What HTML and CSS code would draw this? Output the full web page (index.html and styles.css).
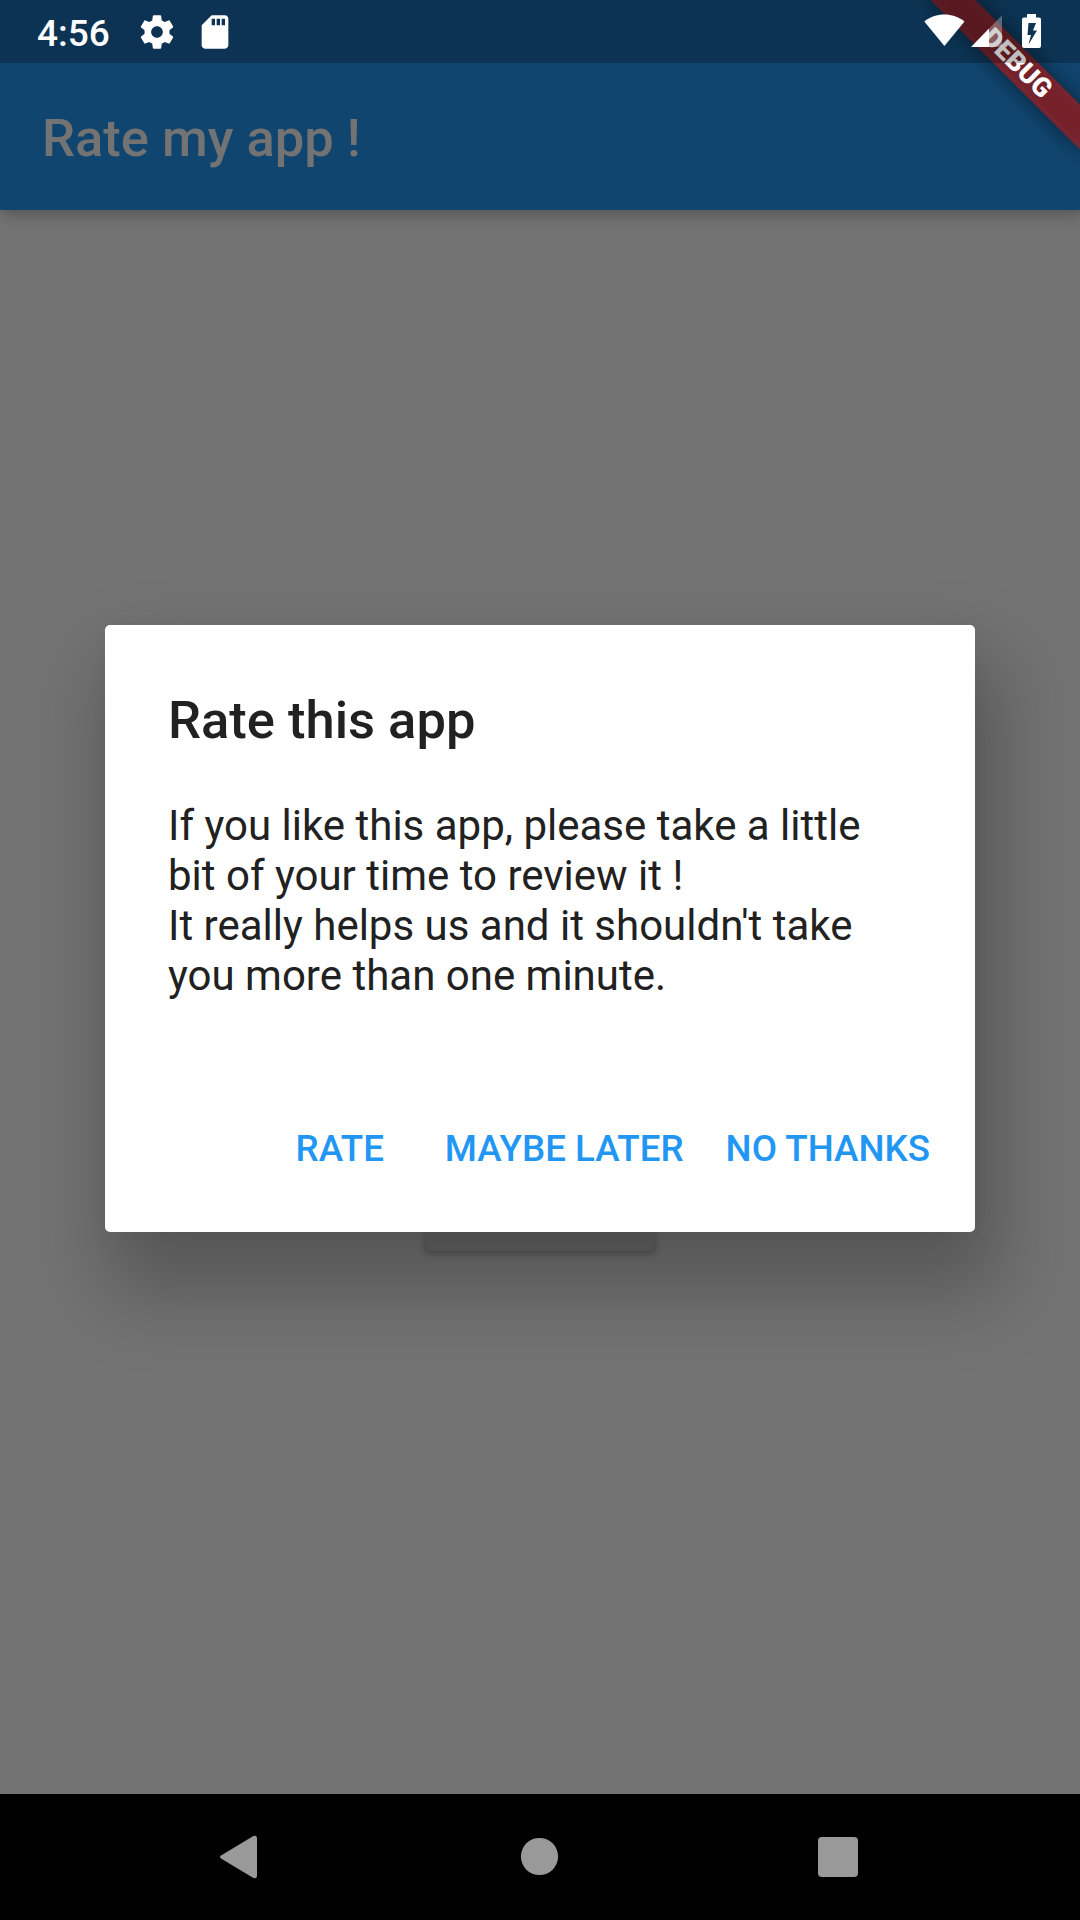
FILE: index.html
```html
<!DOCTYPE html>
<html lang="en">
<head>
<meta charset="utf-8">
<title>Rate my app !</title>
<link rel="stylesheet" href="styles.css">
</head>
<body>
<div class="screen">
  <header class="app-bar"><h1 class="app-title">Rate my app !</h1></header>
  <main class="page"><div class="raised-button"></div></main>
  <nav class="nav-bar">
    <svg class="nav-icon" viewBox="0 0 60 60"><path d="M11.4 28.3 42.6 9.4Q47 7.4 47 12V48Q47 52.600 42.600 50.600L11.400 31.700Q8.600 30 11.400 28.300Z"/></svg>
    <svg class="nav-icon" viewBox="0 0 60 60"><circle cx="30.500" cy="29.500" r="18.600"/></svg>
    <svg class="nav-icon" viewBox="0 0 60 60"><rect x="10" y="10" width="40" height="40" rx="4"/></svg>
  </nav>

  <div class="dialog-layer">
    <section class="dialog">
      <h2 class="dialog-title">Rate this app</h2>
      <p class="dialog-text">If you like this app, please take a little<br>bit of your time to review it !<br>It really helps us and it shouldn't take<br>you more than one minute.</p>
      <div class="dialog-actions">
        <button class="flat-button">RATE</button>
        <button class="flat-button">MAYBE LATER</button>
        <button class="flat-button">NO THANKS</button>
      </div>
    </section>
  </div>

  <div class="banner"><span class="banner-text">DEBUG</span></div>

  <div class="status-bar">
    <div class="status-group">
      <span class="clock">4:56</span>
      <svg class="notice" viewBox="0 0 24 24"><path d="M19.430 12.980c.04-.32.07-.64.07-.98s-.03-.66-.07-.98l2.110-1.650c.19-.15.24-.42.12-.64l-2-3.460c-.12-.22-.39-.3-.61-.22l-2.490 1c-.52-.4-1.080-.73-1.690-.98l-.38-2.650C14.460 2.180 14.250 2 14 2h-4c-.25 0-.46.18-.49.42l-.38 2.650c-.61.25-1.170.59-1.690.98l-2.490-1c-.23-.09-.49 0-.61.22l-2 3.460c-.13.22-.07.49.12.64l2.110 1.650c-.04.32-.07.65-.07.98s.03.66.07.98l-2.110 1.650c-.19.15-.24.42-.12.64l2 3.460c.12.22.39.3.61.22l2.490-1c.52.4 1.080.73 1.690.98l.38 2.650c.03.24.24.42.49.42h4c.25 0 .46-.18.49-.42l.38-2.650c.61-.25 1.170-.59 1.690-.98l2.490 1c.23.09.49 0 .61-.22l2-3.460c.12-.22.07-.49-.12-.64l-2.110-1.650zM12 15.500c-1.930 0-3.500-1.570-3.500-3.500s1.570-3.500 3.500-3.500 3.500 1.570 3.500 3.500-1.570 3.500-3.500 3.500z"/></svg>
      <svg class="notice" viewBox="0 0 24 24"><path d="M18 2h-8L4.020 8 4 20c0 1.100.9 2 2 2h12c1.100 0 2-.9 2-2V4c0-1.100-.9-2-2-2zm-6 6h-2V4h2v4zm3 0h-2V4h2v4zm3 0h-2V4h2v4z"/></svg>
    </div>
    <svg class="system-icons" viewBox="0 0 120 36">
      <path d="M.3 7.500C11.500-1.800 29-1.800 40.500 7.500L20.400 32Z"/>
      <path class="faint" d="M65 14.500 78 1.500V33H65Z"/>
      <path d="M47 33 65 14.500V33Z"/>
      <path fill-rule="evenodd" d="M103 0H112V3.500H115Q117 3.500 117 5.500V32Q117 34 115 34H100Q98 34 98 32V5.500Q98 3.500 100 3.500H103ZM104.500 9 103.500 21H107L104.500 30.500 113 16.500H109L112 9Z"/>
    </svg>
  </div>
</div>
</body>
</html>
```
FILE: styles.css
```css
* { box-sizing: border-box; }

body {
  margin: 0;
  font-family: Roboto, "Liberation Sans", sans-serif;
}

.screen {
  position: relative;
  display: flex;
  flex-direction: column;
  width: 1080px;
  height: 1920px;
  overflow: hidden;
  background: #737373;
}

.app-bar {
  position: relative;
  display: flex;
  align-items: center;
  height: 210px;
  padding: 65px 42px 0;
  background: #10456f;
  box-shadow: 2px 5px 14px rgba(0, 0, 0, .25), 0 0 5px rgba(0, 0, 0, .05);
}

.app-title,
.dialog-title {
  margin: 0;
  font-size: 52.5px;
  line-height: 62px;
  font-weight: 500;
}

.app-title { color: #737373; }

.page {
  flex: 1;
  display: flex;
  flex-direction: column;
  align-items: center;
  justify-content: flex-end;
  padding-bottom: 543px;
}

.raised-button {
  width: 230px;
  height: 94px;
  border-radius: 5px;
  background: #676767;
  box-shadow: 0 3px 7px rgba(0, 0, 0, .25), 0 0 3px rgba(0, 0, 0, .06);
}

.nav-bar {
  position: relative;
  z-index: 1;
  display: flex;
  align-items: center;
  justify-content: space-between;
  height: 126px;
  padding: 0 212px 0 210px;
  background: #000;
}

.nav-icon {
  width: 60px;
  height: 60px;
  fill: #999;
}

.dialog-layer {
  position: absolute;
  inset: 63px 0 126px;
  display: flex;
  align-items: center;
  justify-content: center;
}

.dialog {
  width: 870px;
  height: 607px;
  padding: 64px 0 0;
  border-radius: 5px;
  background: #fff;
  color: #212121;
  box-shadow: 13px 48px 78px 12px rgba(0, 0, 0, .25), 0 0 16px rgba(0, 0, 0, .04);
}

.dialog-title { padding: 0 63px; }

.dialog-text {
  margin: 50px 63px 64px;
  font-size: 42px;
  line-height: 50px;
  white-space: nowrap;
}

.dialog-actions {
  display: flex;
  align-items: center;
  justify-content: flex-end;
  height: 168px;
  padding: 0 24px 0 21px;
}

.flat-button {
  min-width: 168px;
  height: 94px;
  padding: 0 21px;
  border: 0;
  background: none;
  color: #2196f3;
  font: 500 36.75px/44px Roboto, "Liberation Sans", sans-serif;
}

/* Corner ribbon, rotated about the top right corner of the screen. */
.banner {
  position: absolute;
  top: 73.5px;
  left: 975px;
  display: flex;
  align-items: center;
  justify-content: center;
  width: 210px;
  height: 31.5px;
  transform-origin: 105px -73.5px;
  transform: rotate(45deg);
  color: #fff;
}

.banner::before,
.banner::after {
  content: "";
  position: absolute;
  inset: 0;
}

.banner::before {
  background: rgba(0, 0, 0, .5);
  filter: blur(10.4px);
}

.banner::after { background: rgba(183, 28, 28, .627); }

.banner-text {
  position: relative;
  z-index: 1;
  font-size: 26.775px;
  line-height: 27px;
  font-weight: 900;
}

.status-bar {
  position: absolute;
  inset: 0 0 auto;
  display: flex;
  align-items: center;
  justify-content: space-between;
  height: 63px;
  padding: 0 36px 0 37px;
  background: rgba(0, 0, 0, .25);
  color: #fff;
  fill: #fff;
}

.status-group {
  display: flex;
  align-items: center;
}

.clock {
  width: 100px;
  padding-top: 4px;
  font-size: 37px;
  line-height: 44px;
  font-weight: 500;
}

.notice {
  width: 40px;
  height: 40px;
  margin-right: 18px;
}

.system-icons {
  width: 120px;
  height: 36px;
}

.faint { opacity: .3; }
```
